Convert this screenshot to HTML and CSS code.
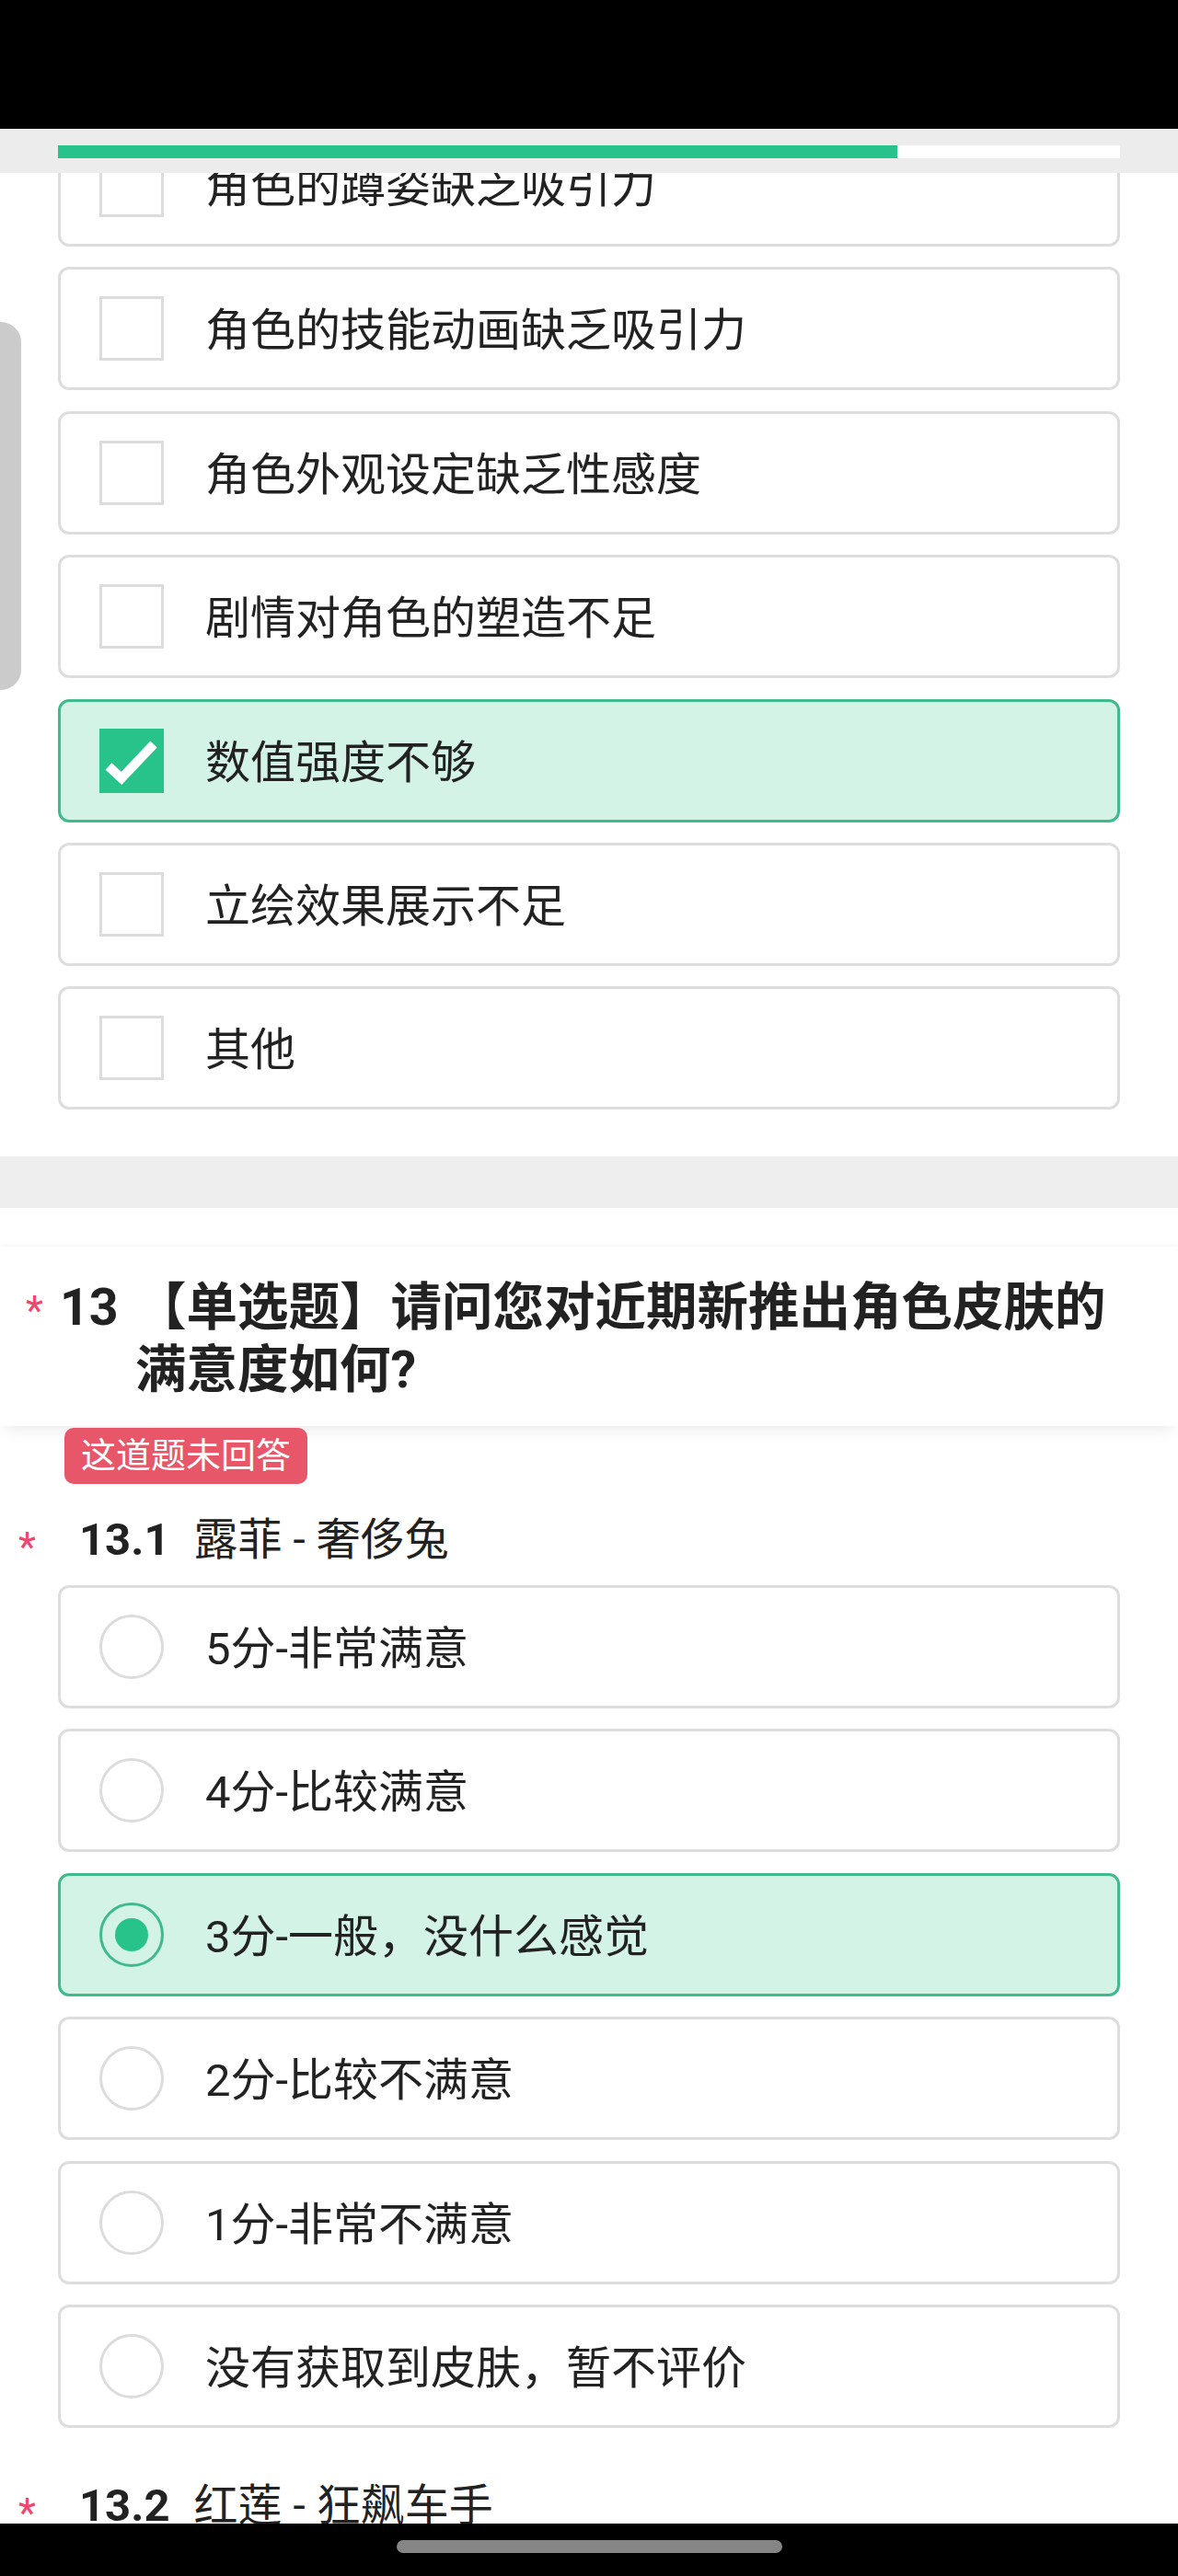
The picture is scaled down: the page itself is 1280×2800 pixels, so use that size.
FILE: index.html
```html
<!DOCTYPE html>
<html>
<head>
  <title>问卷调查</title>
  <link rel="stylesheet" href="styles.css">
</head>
<body>
  <div class="status-bar"></div>
  <div class="progress-bar">
    <div class="progress-track">
      <div class="progress-fill" style="width: 79%"></div>
    </div>
  </div>

  <div class="viewport">
    <div class="side-tab"></div>
    <div class="scroller">
      <!-- question 12 (multi select), scrolled half way -->
      <div class="options">
        <div class="option"><span class="box"></span><span class="label">角色的蹲姿缺乏吸引力</span></div>
        <div class="option"><span class="box"></span><span class="label">角色的技能动画缺乏吸引力</span></div>
        <div class="option"><span class="box"></span><span class="label">角色外观设定缺乏性感度</span></div>
        <div class="option"><span class="box"></span><span class="label">剧情对角色的塑造不足</span></div>
        <div class="option selected">
          <span class="box on">
            <svg width="64" height="64" viewBox="0 0 64 64"><polyline points="7,38 21,51 56,14" fill="none" stroke="#fff" stroke-width="10"/></svg>
          </span>
          <span class="label">数值强度不够</span>
        </div>
        <div class="option"><span class="box"></span><span class="label">立绘效果展示不足</span></div>
        <div class="option"><span class="box"></span><span class="label">其他</span></div>
      </div>

      <div class="section-gap"></div>

      <div class="question">
        <div class="question-head">
          <span class="star">*</span>
          <span class="q-num">13</span>
          <span class="q-title">【单选题】请问您对近期新推出角色皮肤的满意度如何?</span>
        </div>
        <span class="badge">这道题未回答</span>

        <div class="sub-title">
          <span class="star">*</span>
          <b class="sub-num">13.1</b>
          <span>露菲 - 奢侈兔</span>
        </div>
        <div class="options sub-options">
          <div class="option"><span class="radio"></span><span class="label">5分-非常满意</span></div>
          <div class="option"><span class="radio"></span><span class="label">4分-比较满意</span></div>
          <div class="option selected"><span class="radio on"></span><span class="label">3分-一般，没什么感觉</span></div>
          <div class="option"><span class="radio"></span><span class="label">2分-比较不满意</span></div>
          <div class="option"><span class="radio"></span><span class="label">1分-非常不满意</span></div>
          <div class="option"><span class="radio"></span><span class="label">没有获取到皮肤，暂不评价</span></div>
        </div>

        <div class="sub-title next">
          <span class="star">*</span>
          <b class="sub-num">13.2</b>
          <span>红莲 - 狂飙车手</span>
        </div>
      </div>
    </div>
  </div>

  <div class="nav-bar">
    <span class="home-indicator"></span>
  </div>
</body>
</html>
```

FILE: styles.css
```css
* {
  box-sizing: border-box;
}

body {
  margin: 0;
  width: 1280px;
  height: 2800px;
  overflow: hidden;
  background: #fff;
  color: #222;
  font-family: Roboto, "Noto Sans CJK SC", sans-serif;
}

.status-bar {
  height: 140px;
  background: #000;
}

.progress-bar {
  height: 48px;
  padding: 18px 63px 0;
  background: #ececec;
}

.progress-track {
  height: 14px;
  background: #fff;
}

.progress-fill {
  height: 100%;
  background: #27c38a;
}

.viewport {
  position: relative;
  height: 2555px;
  overflow: hidden;
}

/* floating handle on the left edge */
.side-tab {
  position: absolute;
  left: 0;
  top: 162px;
  width: 23px;
  height: 400px;
  background: #cbcbcb;
  border-radius: 0 22px 22px 0;
  z-index: 2;
}

.scroller {
  margin-top: -54px;
}

.options {
  display: flex;
  flex-direction: column;
  gap: 22.4px;
  padding: 0 63px;
}

.option {
  display: flex;
  align-items: center;
  height: 134px;
  padding: 0 42px;
  border: 3px solid #dddddd;
  border-radius: 12px;
  background: #fff;
  font-size: 49px;
}

.option.selected {
  border-color: #3fba8c;
  background: #d3f3e6;
}

.label {
  padding-bottom: 5px;
}

.box {
  flex: none;
  width: 70px;
  height: 70px;
  margin-right: 45px;
  border: 3px solid #dcdcdc;
  background: #fff;
}

.box.on {
  display: flex;
  align-items: center;
  justify-content: center;
  border-color: #27c38a;
  background: #27c38a;
}

.radio {
  flex: none;
  width: 70px;
  height: 70px;
  margin-right: 45px;
  border: 3px solid #dcdcdc;
  border-radius: 50%;
  background: #fff;
}

.radio.on {
  display: flex;
  align-items: center;
  justify-content: center;
  border-color: #3fba8c;
  background: transparent;
}

.radio.on::after {
  content: "";
  width: 36px;
  height: 36px;
  border-radius: 50%;
  background: #27c38a;
}

.section-gap {
  height: 56px;
  margin-top: 50.6px;
  background: #eeeeee;
}

.question {
  padding-top: 42px;
}

.question-head {
  display: flex;
  align-items: flex-start;
  padding: 33px 63px 26px 28px;
  background: #fff;
  font-size: 55.5px;
  font-weight: 700;
  line-height: 68px;
  box-shadow: 0 10px 16px -6px rgba(0, 0, 0, 0.08), 0 -2px 6px rgba(0, 0, 0, 0.03);
}

.star {
  flex: none;
  color: #f0456c;
  font-weight: 400;
  font-size: 44px;
}

.question-head .star {
  width: 37px;
  margin-top: 3px;
}

.q-num {
  flex: none;
  width: 82px;
}

.q-title {
  flex: 1;
}

.badge {
  display: inline-block;
  height: 61px;
  margin: 2px 0 0 70px;
  padding: 0 18px;
  border-radius: 10px;
  background: #e8566a;
  color: #fff;
  font-size: 38px;
  line-height: 61px;
}

.sub-title {
  display: flex;
  align-items: flex-start;
  height: 60px;
  margin-top: 31px;
  padding-left: 20px;
  font-size: 48px;
  line-height: 60px;
}

.sub-title .star {
  width: 66px;
  margin-top: 8px;
  line-height: 60px;
}

.sub-num {
  margin-right: 26px;
  font-size: 49px;
}

.sub-options {
  margin-top: 19px;
}

.sub-title.next {
  margin-top: 55px;
}

.nav-bar {
  display: flex;
  justify-content: center;
  height: 57px;
  padding-top: 18px;
  background: #000;
}

.home-indicator {
  width: 419px;
  height: 14px;
  border-radius: 7px;
  background: #858585;
}
```
